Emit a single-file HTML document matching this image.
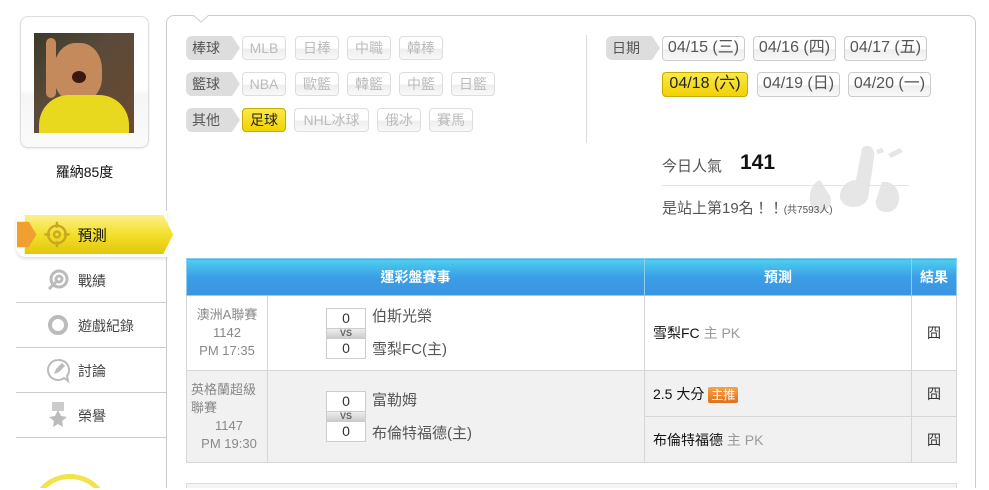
<!DOCTYPE html>
<html style="width:989px;height:490px;overflow:hidden"><head><meta charset="utf-8"><style>
*{box-sizing:border-box;margin:0;padding:0}
body{width:989px;height:490px;overflow:hidden;background:#fff;font-family:"Liberation Sans","Noto Sans CJK TC",sans-serif;position:relative;color:#333}
.abs{position:absolute}
.card{left:20px;top:16px;width:129px;height:132px;border:1px solid #ddd;border-radius:8px;background:linear-gradient(#fff 0,#fff 55%,#f6f6f6 60%,#fafafa);box-shadow:0 1px 2px rgba(0,0,0,.08)}
.photo{left:34px;top:33px;width:100px;height:100px;background:linear-gradient(135deg,#3a3a2a,#5a4a3a 40%,#6b4a2e);overflow:hidden}
.name{left:20px;top:162px;width:129px;text-align:center;font-size:14px;color:#111}
.panel{left:166px;top:15px;width:810px;height:473px;border:1px solid #ccc;border-bottom:none;border-radius:8px 8px 0 0}
.side{left:16px;top:255px;width:151px;height:233px;border-right:1px solid #ccc}
.tab{left:16px;top:214px;width:160px;height:41px}
.mi{position:absolute;left:16px;width:150px;height:45px;border-bottom:1px solid #ccc;font-size:14px;color:#444}
.mi span{position:absolute;left:62px;top:13px}
.lab{position:absolute;height:24px;width:46px;font-size:14px;line-height:24px;color:#555;background:#ddd;border-radius:6px 0 0 6px;padding:0 0 0 6px}
.lab:after{content:"";position:absolute;right:-8px;top:0;border-left:8px solid #ddd;border-top:12px solid transparent;border-bottom:12px solid transparent}
.b{position:absolute;height:24px;border:1px solid #ddd;border-radius:4px;font-size:14px;color:#bbb;text-align:center;line-height:22px;background:linear-gradient(#fff,#fff 50%,#eee 55%,#f8f8f8)}
.d{color:#555;font-size:15px;border-color:#ccc}
.y{background:linear-gradient(#f9e94a,#f2d200);border-color:#c8aa00;color:#222}
table{position:absolute;left:186px;top:258px;width:770px;border-collapse:collapse;font-size:14px;table-layout:fixed}
td,th{border:1px solid #d6d6d6}
th{background:linear-gradient(#4dd0f0,#3b9ee6 50%,#3b94e0);color:#fff;height:37px;font-size:14px;border-color:#8ccff0}
.ev{color:#888;text-align:center;font-size:13px;line-height:18px}
.g td{background:#f1f1f1}
.sc{display:inline-block;width:40px;border:1px solid #ccc;background:#fff;text-align:center;font-size:14px;line-height:19px}
.vs{display:block;background:linear-gradient(#eee,#ccc);font-size:9px;line-height:9px;font-weight:bold;color:#666;border-top:1px solid #ccc;border-bottom:1px solid #ccc}
.gr{color:#999}
.res{text-align:center;color:#333}
</style></head><body>
<div class="abs card"></div>
<div class="abs photo">
<div class="abs" style="left:20px;top:10px;width:48px;height:58px;background:#c58a5c;border-radius:45% 45% 40% 40%"></div>
<div class="abs" style="left:38px;top:38px;width:14px;height:12px;background:#3a1a10;border-radius:50%"></div>
<div class="abs" style="left:5px;top:62px;width:90px;height:38px;background:#e8d81e;border-radius:30px 30px 0 0"></div>
<div class="abs" style="left:12px;top:5px;width:10px;height:60px;background:#c58a5c;border-radius:5px"></div>
</div>
<div class="abs name">羅納85度</div>
<div class="abs panel"></div>
<div class="abs" style="left:193px;top:15px;width:16px;height:9px"><svg width="16" height="9" style="display:block"><path d="M0 0 L8 7 L16 0" fill="#fff" stroke="#ccc"/></svg></div>
<div class="abs side"></div>
<div class="abs" style="left:16px;top:211px;width:151px;height:46px;border-radius:10px 0 0 10px;box-shadow:0 2px 3px rgba(0,0,0,.12);background:#fff"></div>
<svg class="abs tab" width="162" height="42" viewBox="0 0 162 42"><defs><linearGradient id="yg" x1="0" y1="0" x2="0" y2="1"><stop offset="0" stop-color="#fbf08a"/><stop offset=".5" stop-color="#f3df2a"/><stop offset="1" stop-color="#e2c70c"/></linearGradient></defs><path d="M8 1 H150 L160 21 L150 41 H8 Z" fill="url(#yg)"/><path d="M0 8 H12 L20 21 L12 34 H0Z" fill="#f0a030"/>
<g fill="none" stroke="#c9a820" stroke-width="2.5"><circle cx="41" cy="21" r="9"/><circle cx="41" cy="21" r="3"/><path d="M41 8v6M41 28v6M28 21h6M48 21h6"/></g>
<text x="62" y="27" font-size="15" fill="#111" font-family="Liberation Sans,Noto Sans CJK TC,sans-serif">預測</text></svg>
<div class="mi" style="top:258px"><svg class="abs" style="left:30px;top:10px" width="24" height="24"><g fill="none" stroke="#bbb" stroke-width="3"><circle cx="13" cy="11" r="8"/><circle cx="13" cy="11" r="3"/><path d="M10 14 L3 21"/></g></svg><span>戰績</span></div>
<div class="mi" style="top:303px"><svg class="abs" style="left:30px;top:10px" width="24" height="24"><circle cx="12" cy="12" r="8" fill="none" stroke="#bbb" stroke-width="4"/></svg><span>遊戲紀錄</span></div>
<div class="mi" style="top:348px"><svg class="abs" style="left:29px;top:9px" width="26" height="26"><path d="M13 3a10 10 0 1 0 6 18l4 3-1-5A10 10 0 0 0 13 3z" fill="none" stroke="#bbb" stroke-width="2"/><path d="M9 17l2-5 6-6 3 3-6 6z" fill="#bbb"/></svg><span>討論</span></div>
<div class="mi" style="top:393px"><svg class="abs" style="left:30px;top:8px" width="24" height="26"><path d="M6 1h12v9H6z" fill="#ccc"/><path d="M12 9l3 6 6 1-5 4 1 6-5-3-5 3 1-6-5-4 6-1z" fill="#bbb"/></svg><span>榮譽</span></div>
<svg class="abs" style="left:30px;top:474px" width="80" height="14"><circle cx="40" cy="40" r="37.5" fill="none" stroke="#f3e34a" stroke-width="5"/></svg>

<div class="lab" style="left:186px;top:36px">棒球</div>
<div class="b" style="left:242px;top:36px;width:44px">MLB</div>
<div class="b" style="left:295px;top:36px;width:44px">日棒</div>
<div class="b" style="left:347px;top:36px;width:44px">中職</div>
<div class="b" style="left:399px;top:36px;width:44px">韓棒</div>
<div class="lab" style="left:186px;top:72px">籃球</div>
<div class="b" style="left:242px;top:72px;width:44px">NBA</div>
<div class="b" style="left:295px;top:72px;width:44px">歐籃</div>
<div class="b" style="left:347px;top:72px;width:44px">韓籃</div>
<div class="b" style="left:399px;top:72px;width:44px">中籃</div>
<div class="b" style="left:451px;top:72px;width:44px">日籃</div>
<div class="lab" style="left:186px;top:108px">其他</div>
<div class="b y" style="left:242px;top:108px;width:44px">足球</div>
<div class="b" style="left:294px;top:108px;width:75px">NHL冰球</div>
<div class="b" style="left:377px;top:108px;width:44px">俄冰</div>
<div class="b" style="left:429px;top:108px;width:44px">賽馬</div>
<div class="abs" style="left:586px;top:35px;width:1px;height:108px;background:#ddd"></div>
<div class="lab" style="left:606px;top:36px">日期</div>
<div class="b d" style="left:662px;top:36px;width:83px;height:25px;font-size:16px">04/15 (三)</div>
<div class="b d" style="left:753px;top:36px;width:83px;height:25px;font-size:16px">04/16 (四)</div>
<div class="b d" style="left:844px;top:36px;width:83px;height:25px;font-size:16px">04/17 (五)</div>
<div class="b d y" style="left:662px;top:72px;width:86px;height:25px;font-size:16px">04/18 (六)</div>
<div class="b d" style="left:757px;top:72px;width:83px;height:25px;font-size:16px">04/19 (日)</div>
<div class="b d" style="left:848px;top:72px;width:83px;height:25px;font-size:16px">04/20 (一)</div>
<svg class="abs" style="left:800px;top:140px" width="115" height="90"><g fill="#e6e6e6"><path d="M62 8c8-6 14 2 12 10l-6 40c-3 10-20 12-26 4-6-8 2-22 14-22z"/><path d="M20 40c-10 4-14 20-6 30 10 6 20-4 16-14z"/><path d="M82 42c14-2 22 14 14 26-8 8-22 4-20-8z"/><path d="M88 14l12-6 3 4-12 6zM76 10l6-2 2 4-6 2z"/></g></svg>
<div class="abs" style="left:662px;top:155px;font-size:15px;color:#555">今日人氣</div>
<div class="abs" style="left:740px;top:151px;font-size:21px;font-weight:bold;color:#111">141</div>
<div class="abs" style="left:662px;top:185px;width:247px;height:1px;background:#e4e4e4"></div>
<div class="abs" style="left:662px;top:197px;font-size:15px;color:#555">是站上第19名！！<span style="font-size:10px">(共7593人)</span></div>

<table>
<colgroup><col style="width:81px"><col style="width:377px"><col style="width:267px"><col style="width:45px"></colgroup>
<tr><th colspan="2">運彩盤賽事</th><th>預測</th><th>結果</th></tr>
<tr style="height:75px"><td class="ev">澳洲A聯賽<br>1142<br>PM 17:35</td>
<td style="padding-left:58px"><div style="display:flex;align-items:center"><div class="sc">0<span class="vs">VS</span>0</div><div style="margin-left:6px;line-height:33px;color:#555;font-size:15px">伯斯光榮<br>雪梨FC(主)</div></div></td>
<td style="padding-left:8px;color:#111">雪梨FC <span class="gr">主 PK</span></td><td class="res">囧</td></tr>
<tr class="g" style="height:46px"><td class="ev" rowspan="2" style="text-align:left;padding-left:4px">英格蘭超級<br>聯賽<div style="text-align:center">1147<br>PM 19:30</div></td>
<td rowspan="2" style="padding-left:58px"><div style="display:flex;align-items:center"><div class="sc">0<span class="vs">VS</span>0</div><div style="margin-left:6px;line-height:33px;color:#555;font-size:15px">富勒姆<br>布倫特福德(主)</div></div></td>
<td style="padding-left:8px;color:#111">2.5 大分 <span style="background:linear-gradient(#f7a24a,#e0701a);color:#fff;font-size:12px;padding:1px 3px;border-radius:2px">主推</span></td><td class="res">囧</td></tr>
<tr class="g" style="height:46px"><td style="padding-left:8px;color:#111">布倫特福德 <span class="gr">主 PK</span></td><td class="res">囧</td></tr>
</table>
<div class="abs" style="left:186px;top:483px;width:771px;height:5px;border:1px solid #ddd;border-bottom:none;background:#f4f4f4"></div>
</body></html>
